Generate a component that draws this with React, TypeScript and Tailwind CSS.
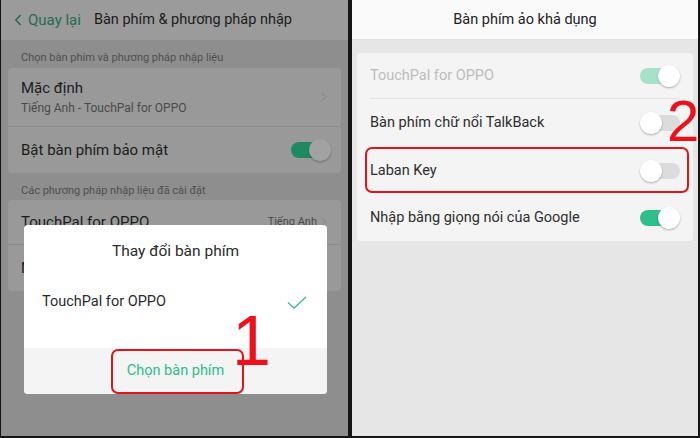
import { ChevronLeft, ChevronRight } from 'lucide-react'

function Toggle({ on, tone }: { on: boolean; tone: 'dim' | 'on' | 'off' | 'disabled' }) {
  const track =
    tone === 'dim'
      ? 'bg-[#1f8a62]'
      : tone === 'on'
        ? 'bg-[#2fbf8a]'
        : tone === 'disabled'
          ? 'bg-[#a6e2c9]'
          : 'bg-[#dcdcdc]'
  const knob = tone === 'dim' ? 'bg-[#a2a2a2]' : 'bg-white'
  return (
    <div className="relative w-[40px] h-[22px] flex items-center">
      <div className={`h-[16px] rounded-full ${track} ${on ? 'w-[32px] ml-0' : 'w-[32px] ml-[8px]'}`} />
      <div
        className={`absolute top-0 w-[22px] h-[22px] rounded-full ${knob} shadow-[0_1px_2px_rgba(0,0,0,0.3)] ${
          on ? 'right-0' : 'left-0'
        }`}
      />
    </div>
  )
}

function LeftPanel() {
  return (
    <div className="relative w-[347px] h-full bg-[#8e8e8e] overflow-hidden">
      <header className="h-[40px] bg-[#9b9b9b] flex items-center pl-[8px]">
        <ChevronLeft className="w-[18px] h-[18px] text-[#1b6e50]" strokeWidth={2} />
        <span className="ml-px text-[15px] text-[#1b6e50]">Quay lại</span>
        <span className="ml-[13px] text-[14.5px] text-[#1c1c1c]">Bàn phím &amp; phương pháp nhập</span>
      </header>

      <div className="px-[7px]">
        <div className="h-[28px] flex items-end pb-[2px] pl-[13px] text-[11px] text-[#4f4f4f]">
          Chọn bàn phím và phương pháp nhập liệu
        </div>
        <div className="bg-[#999999] rounded-[4px]">
          <div className="h-[59px] flex items-center justify-between pl-[13px] pr-[10px] border-b border-[#8c8c8c]">
            <div>
              <div className="text-[15px] leading-[20px] text-[#1c1c1c]">Mặc định</div>
              <div className="text-[12px] leading-[16px] text-[#4a4a4a] mt-[2px]">Tiếng Anh - TouchPal for OPPO</div>
            </div>
            <ChevronRight className="w-[14px] h-[14px] text-[#7e7e7e]" strokeWidth={1.5} />
          </div>
          <div className="h-[46px] flex items-center justify-between pl-[13px] pr-[10px]">
            <span className="text-[15px] text-[#1c1c1c]">Bật bàn phím bảo mật</span>
            <Toggle on tone="dim" />
          </div>
        </div>

        <div className="h-[27px] flex items-end pb-px pl-[13px] text-[11px] text-[#4f4f4f]">
          Các phương pháp nhập liệu đã cài đặt
        </div>
        <div className="bg-[#999999] rounded-[4px]">
          <div className="h-[45px] flex items-center justify-between pl-[13px] pr-[10px] border-b border-[#8c8c8c]">
            <span className="text-[15px] text-[#1c1c1c]">TouchPal for OPPO</span>
            <div className="flex items-center">
              <span className="text-[11px] text-[#4a4a4a]">Tiếng Anh</span>
              <ChevronRight className="w-[14px] h-[14px] text-[#7e7e7e]" strokeWidth={1.5} />
            </div>
          </div>
          <div className="h-[46px] flex items-center justify-between pl-[13px] pr-[10px]">
            <span className="text-[15px] text-[#1c1c1c]">Nhập bằng giọng nói của Google</span>
            <ChevronRight className="w-[14px] h-[14px] text-[#7e7e7e]" strokeWidth={1.5} />
          </div>
        </div>
      </div>

      {/* dialog */}
      <div className="absolute left-[23px] top-[225px] w-[303px] h-[169px] bg-white rounded-[4px] overflow-hidden flex flex-col">
        <div className="h-[53px] flex items-center justify-center text-[15.5px] text-[#2b2b2b]">Thay đổi bàn phím</div>
        <div className="h-[48px] flex items-center justify-between pl-[18px] pr-[20px]">
          <span className="text-[14.5px] text-[#2b2b2b]">TouchPal for OPPO</span>
          <svg width="20" height="13" viewBox="0 0 20 13" fill="none">
            <path d="M1 6.5 L7 12 L19 1" stroke="#3dbd8e" strokeWidth="1.3" />
          </svg>
        </div>
        <div className="flex-1" />
        <div className="h-[46px] bg-[#f4f4f4] flex items-center justify-center text-[14.5px] text-[#2dbd8a]">
          Chọn bàn phím
        </div>
      </div>

      {/* annotations */}
      <div className="absolute left-[110px] top-[349px] w-[133px] h-[45px] border-2 border-[#e1141b] rounded-[7px]" />
      <div className="absolute left-[231px] top-[306px] text-[70px] leading-none text-[#f0101a] font-['Liberation_Sans',sans-serif]">
        1
      </div>
    </div>
  )
}

function RightPanel() {
  const rows = [
    { label: 'Bàn phím chữ nổi TalkBack', on: false, tone: 'off' as const, h: 'h-[48px]' },
    { label: 'Laban Key', on: false, tone: 'off' as const, h: 'h-[47px]' },
    { label: 'Nhập bằng giọng nói của Google', on: true, tone: 'on' as const, h: 'h-[47px]' },
  ]
  return (
    <div className="relative flex-1 h-full bg-[#e6e6e6] overflow-hidden">
      <header className="h-[40px] bg-[#fafafa] border-b border-[#e0e0e0] flex items-center justify-center text-[14.5px] text-[#222]">
        Bàn phím ảo khả dụng
      </header>
      <div className="px-[5px] pt-[13px]">
        <div className="bg-[#f4f4f4] rounded-[4px]">
          <div className="mx-[13px] h-[46px] flex items-center justify-between border-b border-[#e2e2e2]">
            <span className="text-[14.5px] text-[#bcbcbc]">TouchPal for OPPO</span>
            <Toggle on tone="disabled" />
          </div>
          {rows.map((r) => (
            <div key={r.label} className={`mx-[13px] ${r.h} flex items-center justify-between`}>
              <span className="text-[14.5px] text-[#2e2e2e]">{r.label}</span>
              <Toggle on={r.on} tone={r.tone} />
            </div>
          ))}
        </div>
      </div>

      <div className="absolute left-[13px] top-[147px] w-[324px] h-[46px] border-2 border-[#e1141b] rounded-[7px]" />
      <div className="absolute left-[315px] top-[92px] text-[58px] leading-none text-[#f0101a] font-['Liberation_Sans',sans-serif]">
        2
      </div>
    </div>
  )
}

export default function App() {
  return (
    <div className="w-[700px] h-[438px] bg-[#151515] flex gap-[4px] pl-px pr-[2px] pb-[2px] font-['Roboto',sans-serif]">
      <LeftPanel />
      <RightPanel />
    </div>
  )
}
